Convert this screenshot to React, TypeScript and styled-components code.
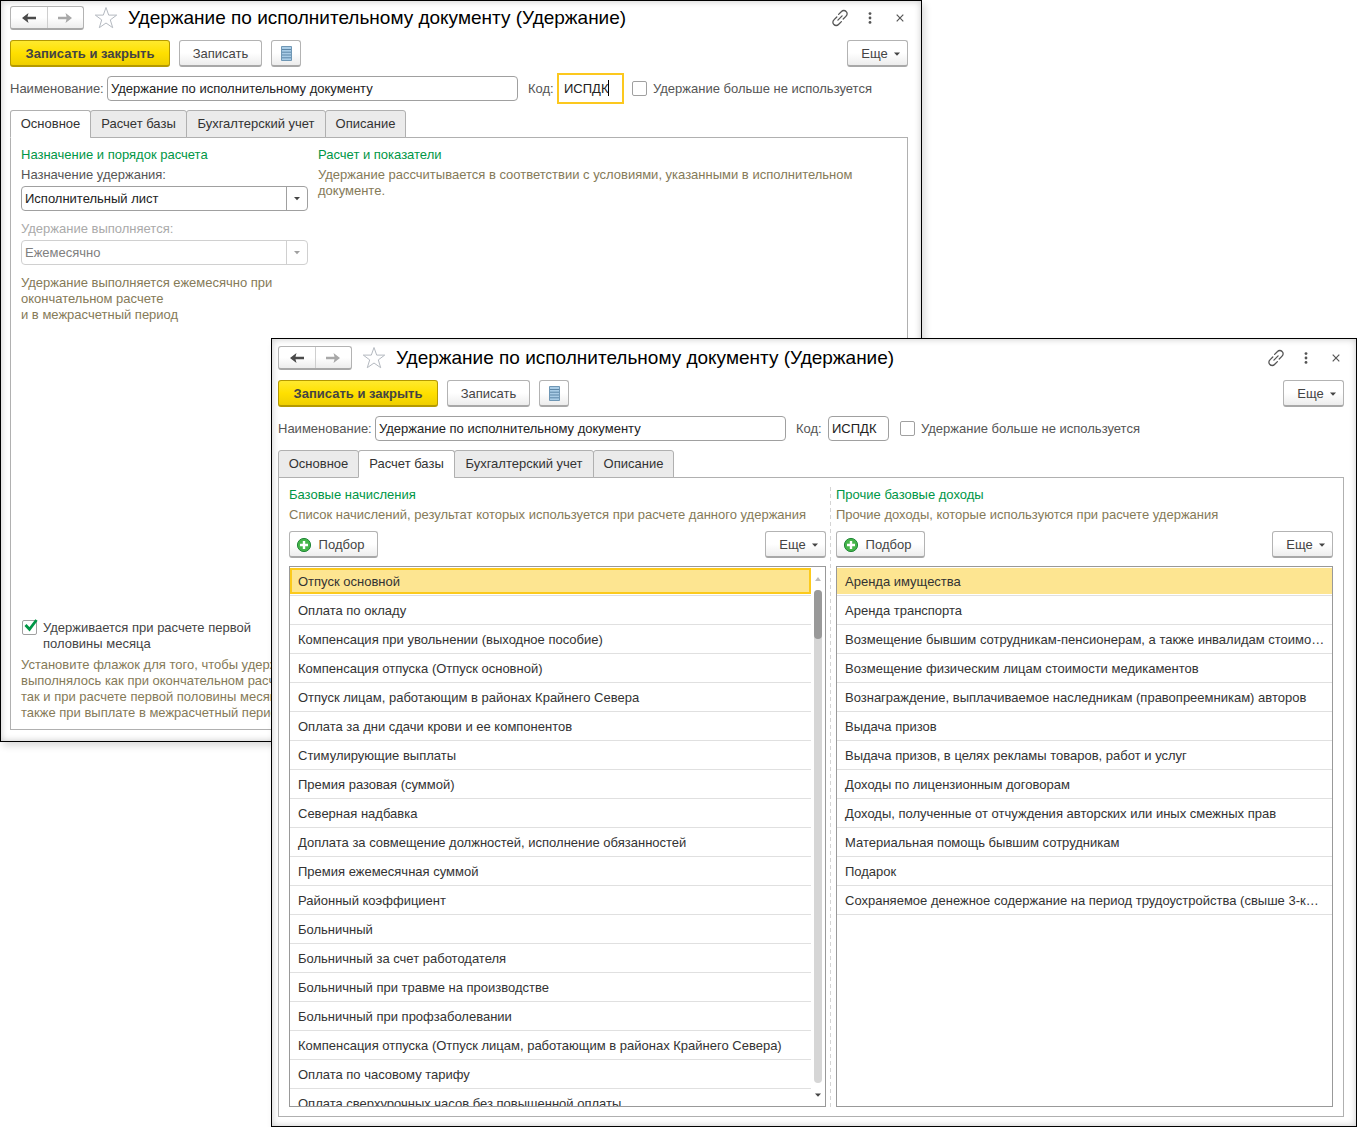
import React, { useId, useState } from "react";
import styled, { createGlobalStyle, css } from "styled-components";

const GlobalStyle = createGlobalStyle`
  *, *::before, *::after { box-sizing: border-box; }
  body {
    margin: 0;
    background: #fff;
    color: #333;
    font: 13px/16px "Liberation Sans", Arial, sans-serif;
  }
  button, input, select { font: inherit; color: inherit; margin: 0; }
`;

const LINE = "#a0a0a0";

/* ---------- windows ---------- */

const Desktop = styled.main`
  display: grid;
  min-height: 100vh;
`;

const Window = styled.section<{ $place: "back" | "front" }>`
  grid-area: 1 / 1;
  align-self: start;
  border: 1px solid #000;
  background: #fff;
  min-width: 0;
  box-shadow:
    inset 0 0 7px rgba(0, 0, 0, 0.22),
    3px 4px 7px rgba(0, 0, 0, 0.14);
  ${(p) =>
    p.$place === "back"
      ? css`
          margin-right: 435px;
          padding: 5px 13px 11px 9px;
        `
      : css`
          margin: 338px 0 0 271px;
          padding: 7px 12px 9px 6px;
          z-index: 1;
        `}
`;

const TitleBar = styled.header`
  display: flex;
  align-items: center;
  height: 24px;
`;

const Title = styled.h1`
  flex: 1;
  margin: 0 0 0 10px;
  font-size: 19px;
  line-height: 26px;
  font-weight: 400;
  color: #000;
  white-space: nowrap;
`;

const raised = css`
  border: 1px solid #b3b3b3;
  border-bottom: 2px solid #a8a8a8;
  border-radius: 3px;
  background: linear-gradient(#fff 50%, #ededed);
`;

const History = styled.div`
  ${raised}
  display: flex;
  width: 74px;
  height: 24px;
`;

const HistoryButton = styled.button`
  flex: 1;
  display: grid;
  place-items: center;
  padding: 0;
  border: 0;
  background: none;
  color: #4a4a4a;
  & + & {
    border-left: 1px solid #cfcfcf;
    color: #a8a8a8;
  }
`;

const PlainIconButton = styled.button`
  display: grid;
  place-items: center;
  width: 24px;
  height: 24px;
  padding: 0;
  border: 0;
  background: none;
  color: #555;
`;

const FavouriteButton = styled(PlainIconButton)`
  margin-left: 10px;
  color: #b4b9c0;
`;

const WindowActions = styled.div`
  display: flex;
  gap: 6px;
  margin-right: -4px;
`;

const Toolbar = styled.div`
  display: flex;
  align-items: center;
  gap: 9px;
  margin-top: 10px;
`;

const Button = styled.button<{ $primary?: boolean; $width: number }>`
  ${raised}
  display: flex;
  align-items: center;
  justify-content: center;
  width: ${(p) => p.$width}px;
  height: 27px;
  padding: 2px 0 0;
  color: #444;
  white-space: nowrap;
  ${(p) =>
    p.$primary &&
    css`
      border-color: #b59a00;
      background: linear-gradient(#ffe92e, #ffe000 50%, #efcf00);
      font-weight: 700;
    `}
`;

const IconButton = styled(Button)`
  padding: 0;
`;

const MoreButton = styled(Button)`
  margin-left: auto;
  gap: 6px;
  padding-left: 6px;
`;

const PickButton = styled(Button)`
  gap: 7px;
  padding-right: 7px;
`;

/* ---------- form fields ---------- */

const Fields = styled.div`
  display: flex;
  align-items: center;
  height: 25px;
  margin-top: 9px;
  color: #555;
`;

const NameLabel = styled.label`
  width: 97px;
  white-space: nowrap;
`;

const CodeLabel = styled.label`
  width: 32px;
  margin-left: 10px;
`;

const TextInput = styled.input<{ $width: number; $active?: boolean }>`
  width: ${(p) => p.$width}px;
  height: 25px;
  padding: 0 3px;
  border: 1px solid ${LINE};
  border-radius: 4px;
  background: #fff;
  color: #222;
  outline: none;
  ${(p) =>
    p.$active &&
    css`
      border-color: transparent;
      border-radius: 0;
      outline: 2px solid #fcc81e;
      outline-offset: 1px;
    `}
`;

const CodeBox = styled.span<{ $active?: boolean }>`
  position: relative;
  display: flex;
  ${(p) =>
    p.$active &&
    css`
      &::after {
        content: "";
        position: absolute;
        left: 48px;
        top: 4px;
        width: 1px;
        height: 16px;
        background: #000;
      }
    `}
`;

const Check = styled.input`
  appearance: none;
  flex: none;
  width: 15px;
  height: 15px;
  border: 1px solid ${LINE};
  border-radius: 2px;
  background: #fff;
`;

const UnusedLabel = styled.label`
  display: flex;
  align-items: center;
  gap: 6px;
  margin-left: 11px;
  white-space: nowrap;
`;

const SelectFrame = styled.div<{ $muted?: boolean }>`
  display: flex;
  height: 25px;
  border: 1px solid ${(p) => (p.$muted ? "#d0d0d0" : LINE)};
  border-radius: 4px;
  color: ${(p) => (p.$muted ? "#808080" : "#222")};
  svg {
    flex: none;
    width: 21px;
    height: 23px;
    padding: 9px 7px;
    border-left: 1px solid ${(p) => (p.$muted ? "#d0d0d0" : LINE)};
    color: ${(p) => (p.$muted ? "#a0a0a0" : "#444")};
  }
`;

const Select = styled.select`
  appearance: none;
  flex: 1;
  min-width: 0;
  padding: 0 3px;
  border: 0;
  background: none;
  opacity: 1;
  outline: none;
`;

/* ---------- tabs ---------- */

const Tabs = styled.div`
  position: relative;
  display: flex;
  height: 28px;
  margin: 9px 0 -1px;
`;

const Tab = styled.button<{ $active: boolean; $width: number }>`
  width: ${(p) => p.$width}px;
  padding: 0;
  border: 1px solid #b0b0b0;
  border-radius: 3px 3px 0 0;
  background: ${(p) => (p.$active ? "#fff" : "#ebebeb")};
  border-bottom-color: ${(p) => (p.$active ? "#fff" : "#b0b0b0")};
  white-space: nowrap;
  & + & {
    margin-left: -1px;
  }
`;

const Panel = styled.div`
  border: 1px solid #b0b0b0;
`;

const GroupTitle = styled.h2`
  margin: 0;
  font-size: 13px;
  line-height: 16px;
  font-weight: 400;
  color: #009646;
`;

const Note = styled.p`
  margin: 0;
  color: #857a58;
`;

/* ---------- main tab ---------- */

const MainPanel = styled(Panel)`
  display: grid;
  grid-template-columns: 287px 1fr;
  gap: 10px;
  min-height: 593px;
  padding: 9px 10px 8px;
`;

const Column = styled.div`
  display: flex;
  flex-direction: column;
  min-width: 0;
  gap: 4px;
`;

const Field = styled.div<{ $muted?: boolean }>`
  display: grid;
  gap: 3px;
  margin-bottom: 6px;
  color: ${(p) => (p.$muted ? "#aaa" : "#555")};
`;

const Bottom = styled.div`
  display: grid;
  gap: 5px;
  margin-top: auto;
  white-space: pre-line;
`;

const FirstHalf = styled.label`
  display: flex;
  gap: 6px;
  padding-left: 1px;
  color: #444;
`;

const TickBox = styled.span`
  position: relative;
  display: flex;
  height: 15px;
  svg {
    position: absolute;
    left: 2px;
    bottom: 3px;
    pointer-events: none;
  }
`;

const Lines = styled(Note)`
  white-space: pre;
`;

/* ---------- base tab ---------- */

const BasePanel = styled(Panel)`
  display: grid;
  grid-template-columns: 537fr 5px 502fr;
  padding: 9px 10px;
`;

const Divider = styled.div`
  width: 1px;
  margin-left: 4px;
  background: repeating-linear-gradient(#d4d4d4 0 4px, transparent 4px 7px);
`;

const ListGroup = styled(Column)`
  & + ${Divider} + & {
    padding-left: 5px;
  }
`;

const ListTools = styled.div`
  display: flex;
  margin: 4px 0;
`;

const ListFrame = styled.div`
  display: flex;
  height: 541px;
  border: 1px solid #999;
  overflow: hidden;
`;

const List = styled.ul`
  flex: 1;
  min-width: 0;
  margin: 0;
  padding: 0;
  list-style: none;
`;

const Row = styled.li<{ $state: "plain" | "selected" | "focused" }>`
  height: 29px;
  padding: 7px 4px 5px 8px;
  border-bottom: 1px solid #e0e0e0;
  overflow: hidden;
  text-overflow: ellipsis;
  white-space: nowrap;
  ${(p) =>
    p.$state !== "plain" &&
    css`
      background: #fde591;
      background-clip: padding-box;
      box-shadow:
        inset 0 -1px #fff,
        inset 0 1px #fff;
    `}
  ${(p) =>
    p.$state === "focused" &&
    css`
      box-shadow:
        inset 0 -1px #fff,
        inset 0 1px #fff,
        inset 2px 3px #fcca1c,
        inset -2px -3px #fcca1c;
    `}
`;

const ScrollBar = styled.div`
  display: grid;
  grid-template-rows: 23px 1fr 23px;
  justify-items: center;
  width: 14px;
`;

const ScrollArrow = styled.button<{ $off?: boolean }>`
  display: grid;
  place-items: center;
  width: 14px;
  padding: 0;
  border: 0;
  background: none;
  color: ${(p) => (p.$off ? "#bbb" : "#444")};
`;

const Track = styled.div`
  width: 8px;
  border-radius: 4px;
  background: #d6d6d6;
`;

const Thumb = styled.div`
  height: 49px;
  border-radius: 4px;
  background: #999;
`;

/* ---------- drawings ---------- */

const Arrow = ({ back }: { back?: boolean }) => (
  <svg width="14" height="10" viewBox="0 0 14 10">
    <path
      d={back ? "M6.5 0L0 5l6.5 5L5.5 6.3H14V3.7H5.5z" : "M7.5 0L14 5l-6.5 5 1-3.7H0V3.7h8.5z"}
      fill="currentColor"
    />
  </svg>
);

const Star = () => (
  <svg width="24" height="24" viewBox="0 0 24 24" fill="none" stroke="currentColor">
    <path d="M12 1.5l2.7 7.6h8l-6.4 4.8 2.4 7.8L12 17l-6.7 4.7 2.4-7.8L1.3 9.1h8z" />
  </svg>
);

const LinkIcon = () => (
  <svg
    width="18"
    height="18"
    viewBox="0 0 18 18"
    fill="none"
    stroke="currentColor"
    strokeWidth="1.3"
    strokeLinecap="round"
  >
    <path d="M7.6 5.4l2.9-2.9a3.1 3.1 0 0 1 4.6 0 3.1 3.1 0 0 1 0 4.6l-2.9 2.9" />
    <path d="M10.4 12.6l-2.9 2.9a3.1 3.1 0 0 1-4.6 0 3.1 3.1 0 0 1 0-4.6L5.8 8" />
    <path d="M6.9 11.1l4.2-4.2" />
  </svg>
);

const Dots = () => (
  <svg width="4" height="12" viewBox="0 0 4 12" fill="currentColor">
    <circle cx="2" cy="1.6" r="1.4" />
    <circle cx="2" cy="6" r="1.4" />
    <circle cx="2" cy="10.4" r="1.4" />
  </svg>
);

const Cross = () => (
  <svg width="8" height="8" viewBox="0 0 8 8" stroke="currentColor" strokeWidth="1.2">
    <path d="M.7.7l6.6 6.6M7.3.7L.7 7.3" />
  </svg>
);

const ReportIcon = () => (
  <svg width="11" height="15" viewBox="0 0 11 15">
    <path d="M.5.5h10v14H.5z" fill="#a9cce6" stroke="#6f97b5" />
    <path d="M1 3.5h9M1 6.2h9M1 9h9M1 11.8h9" stroke="#5d87a8" />
  </svg>
);

const Plus = () => (
  <svg width="16" height="16" viewBox="0 0 16 16">
    <circle cx="8" cy="8" r="6.6" fill="#45b549" stroke="#23873a" />
    <path d="M8 4v8M4 8h8" stroke="#fff" strokeWidth="2.4" />
  </svg>
);

const Caret = ({ up }: { up?: boolean }) => (
  <svg width="6" height="4" viewBox="0 0 6 4" fill="currentColor">
    <path d={up ? "M0 4h6L3 0z" : "M0 .5h6l-3 3.2z"} />
  </svg>
);

const Tick = () => (
  <svg width="14" height="13" viewBox="0 0 14 13" fill="none" stroke="#009646" strokeWidth="2.8">
    <path d="M1.5 6l4 4.3L12.5 1" />
  </svg>
);

/* ---------- shared parts ---------- */

const More = () => (
  <MoreButton type="button" $width={61}>
    Еще <Caret />
  </MoreButton>
);

const TABS = [
  { name: "Основное", width: 81 },
  { name: "Расчет базы", width: 97 },
  { name: "Бухгалтерский учет", width: 140 },
  { name: "Описание", width: 81 },
];

interface CardProps {
  place: "back" | "front";
  tab: string;
  editingCode?: boolean;
  children: React.ReactNode;
}

function DeductionCard({ place, tab, editingCode, children }: CardProps) {
  const id = useId();
  return (
    <Window $place={place} aria-labelledby={id + "title"}>
      <TitleBar>
        <History>
          <HistoryButton type="button" aria-label="Назад"><Arrow back /></HistoryButton>
          <HistoryButton type="button" aria-label="Вперед"><Arrow /></HistoryButton>
        </History>
        <FavouriteButton type="button" aria-label="В избранное"><Star /></FavouriteButton>
        <Title id={id + "title"}>Удержание по исполнительному документу (Удержание)</Title>
        <WindowActions>
          <PlainIconButton type="button" aria-label="Ссылка"><LinkIcon /></PlainIconButton>
          <PlainIconButton type="button" aria-label="Меню"><Dots /></PlainIconButton>
          <PlainIconButton type="button" aria-label="Закрыть"><Cross /></PlainIconButton>
        </WindowActions>
      </TitleBar>
      <Toolbar>
        <Button type="button" $primary $width={160}>Записать и закрыть</Button>
        <Button type="button" $width={83}>Записать</Button>
        <IconButton type="button" $width={30} aria-label="Отчет"><ReportIcon /></IconButton>
        <More />
      </Toolbar>
      <Fields>
        <NameLabel htmlFor={id + "name"}>Наименование:</NameLabel>
        <TextInput id={id + "name"} $width={411} defaultValue="Удержание по исполнительному документу" />
        <CodeLabel htmlFor={id + "code"}>Код:</CodeLabel>
        <CodeBox $active={editingCode}>
          <TextInput id={id + "code"} $width={61} $active={editingCode} defaultValue="ИСПДК" />
        </CodeBox>
        <UnusedLabel>
          <Check type="checkbox" />
          Удержание больше не используется
        </UnusedLabel>
      </Fields>
      <Tabs role="tablist">
        {TABS.map((t) => (
          <Tab
            key={t.name}
            type="button"
            role="tab"
            aria-selected={t.name === tab}
            $active={t.name === tab}
            $width={t.width}
          >
            {t.name}
          </Tab>
        ))}
      </Tabs>
      {children}
    </Window>
  );
}

const ACCRUALS = [
  "Отпуск основной",
  "Оплата по окладу",
  "Компенсация при увольнении (выходное пособие)",
  "Компенсация отпуска (Отпуск основной)",
  "Отпуск лицам, работающим в районах Крайнего Севера",
  "Оплата за дни сдачи крови и ее компонентов",
  "Стимулирующие выплаты",
  "Премия разовая (суммой)",
  "Северная надбавка",
  "Доплата за совмещение должностей, исполнение обязанностей",
  "Премия ежемесячная суммой",
  "Районный коэффициент",
  "Больничный",
  "Больничный за счет работодателя",
  "Больничный при травме на производстве",
  "Больничный при профзаболевании",
  "Компенсация отпуска (Отпуск лицам, работающим в районах Крайнего Севера)",
  "Оплата по часовому тарифу",
  "Оплата сверхурочных часов без повышенной оплаты",
];

const INCOMES = [
  "Аренда имущества",
  "Аренда транспорта",
  "Возмещение бывшим сотрудникам-пенсионерам, а также инвалидам стоимо…",
  "Возмещение физическим лицам стоимости медикаментов",
  "Вознаграждение, выплачиваемое наследникам (правопреемникам) авторов",
  "Выдача призов",
  "Выдача призов, в целях рекламы товаров, работ и услуг",
  "Доходы по лицензионным договорам",
  "Доходы, полученные от отчуждения авторских или иных смежных прав",
  "Материальная помощь бывшим сотрудникам",
  "Подарок",
  "Сохраняемое денежное содержание на период трудоустройства (свыше 3-к…",
];

interface PickListProps {
  title: string;
  note: string;
  items: string[];
  focused?: boolean;
}

const PickList = ({ title, note, items, focused }: PickListProps) => (
  <ListGroup>
    <GroupTitle>{title}</GroupTitle>
    <Note>{note}</Note>
    <ListTools>
      <PickButton type="button" $width={89}>
        <Plus /> Подбор
      </PickButton>
      <More />
    </ListTools>
    <ListFrame>
      <List role="listbox" aria-label={title}>
        {items.map((item, i) => (
          <Row
            key={item}
            role="option"
            aria-selected={i === 0}
            $state={i > 0 ? "plain" : focused ? "focused" : "selected"}
          >
            {item}
          </Row>
        ))}
      </List>
      {focused && (
        <ScrollBar>
          <ScrollArrow type="button" $off aria-label="Вверх"><Caret up /></ScrollArrow>
          <Track><Thumb /></Track>
          <ScrollArrow type="button" aria-label="Вниз"><Caret /></ScrollArrow>
        </ScrollBar>
      )}
    </ListFrame>
  </ListGroup>
);

export default function App() {
  const [firstHalf, setFirstHalf] = useState(true);
  return (
    <>
      <GlobalStyle />
      <Desktop>
        <DeductionCard place="back" tab="Основное" editingCode>
          <MainPanel>
            <Column>
              <GroupTitle>Назначение и порядок расчета</GroupTitle>
              <Field>
                <label htmlFor="purpose">Назначение удержания:</label>
                <SelectFrame>
                  <Select id="purpose">
                    <option>Исполнительный лист</option>
                  </Select>
                  <Caret />
                </SelectFrame>
              </Field>
              <Field $muted>
                <label htmlFor="period">Удержание выполняется:</label>
                <SelectFrame $muted>
                  <Select id="period" disabled>
                    <option>Ежемесячно</option>
                  </Select>
                  <Caret />
                </SelectFrame>
              </Field>
              <Lines>{"Удержание выполняется ежемесячно при\nокончательном расчете\nи в межрасчетный период"}</Lines>
              <Bottom>
                <FirstHalf>
                  <TickBox>
                    <Check
                      type="checkbox"
                      checked={firstHalf}
                      onChange={(e) => setFirstHalf(e.target.checked)}
                    />
                    {firstHalf && <Tick />}
                  </TickBox>
                  <span>{"Удерживается при расчете первой\nполовины месяца"}</span>
                </FirstHalf>
                <Lines>
                  {"Установите флажок для того, чтобы удержание\nвыполнялось как при окончательном расчете,\nтак и при расчете первой половины месяца, а\nтакже при выплате в межрасчетный период"}
                </Lines>
              </Bottom>
            </Column>
            <Column>
              <GroupTitle>Расчет и показатели</GroupTitle>
              <Lines>{"Удержание рассчитывается в соответствии с условиями, указанными в исполнительном\nдокументе."}</Lines>
            </Column>
          </MainPanel>
        </DeductionCard>

        <DeductionCard place="front" tab="Расчет базы">
          <BasePanel>
            <PickList
              title="Базовые начисления"
              note="Список начислений, результат которых используется при расчете данного удержания"
              items={ACCRUALS}
              focused
            />
            <Divider />
            <PickList
              title="Прочие базовые доходы"
              note="Прочие доходы, которые используются при расчете удержания"
              items={INCOMES}
            />
          </BasePanel>
        </DeductionCard>
      </Desktop>
    </>
  );
}
